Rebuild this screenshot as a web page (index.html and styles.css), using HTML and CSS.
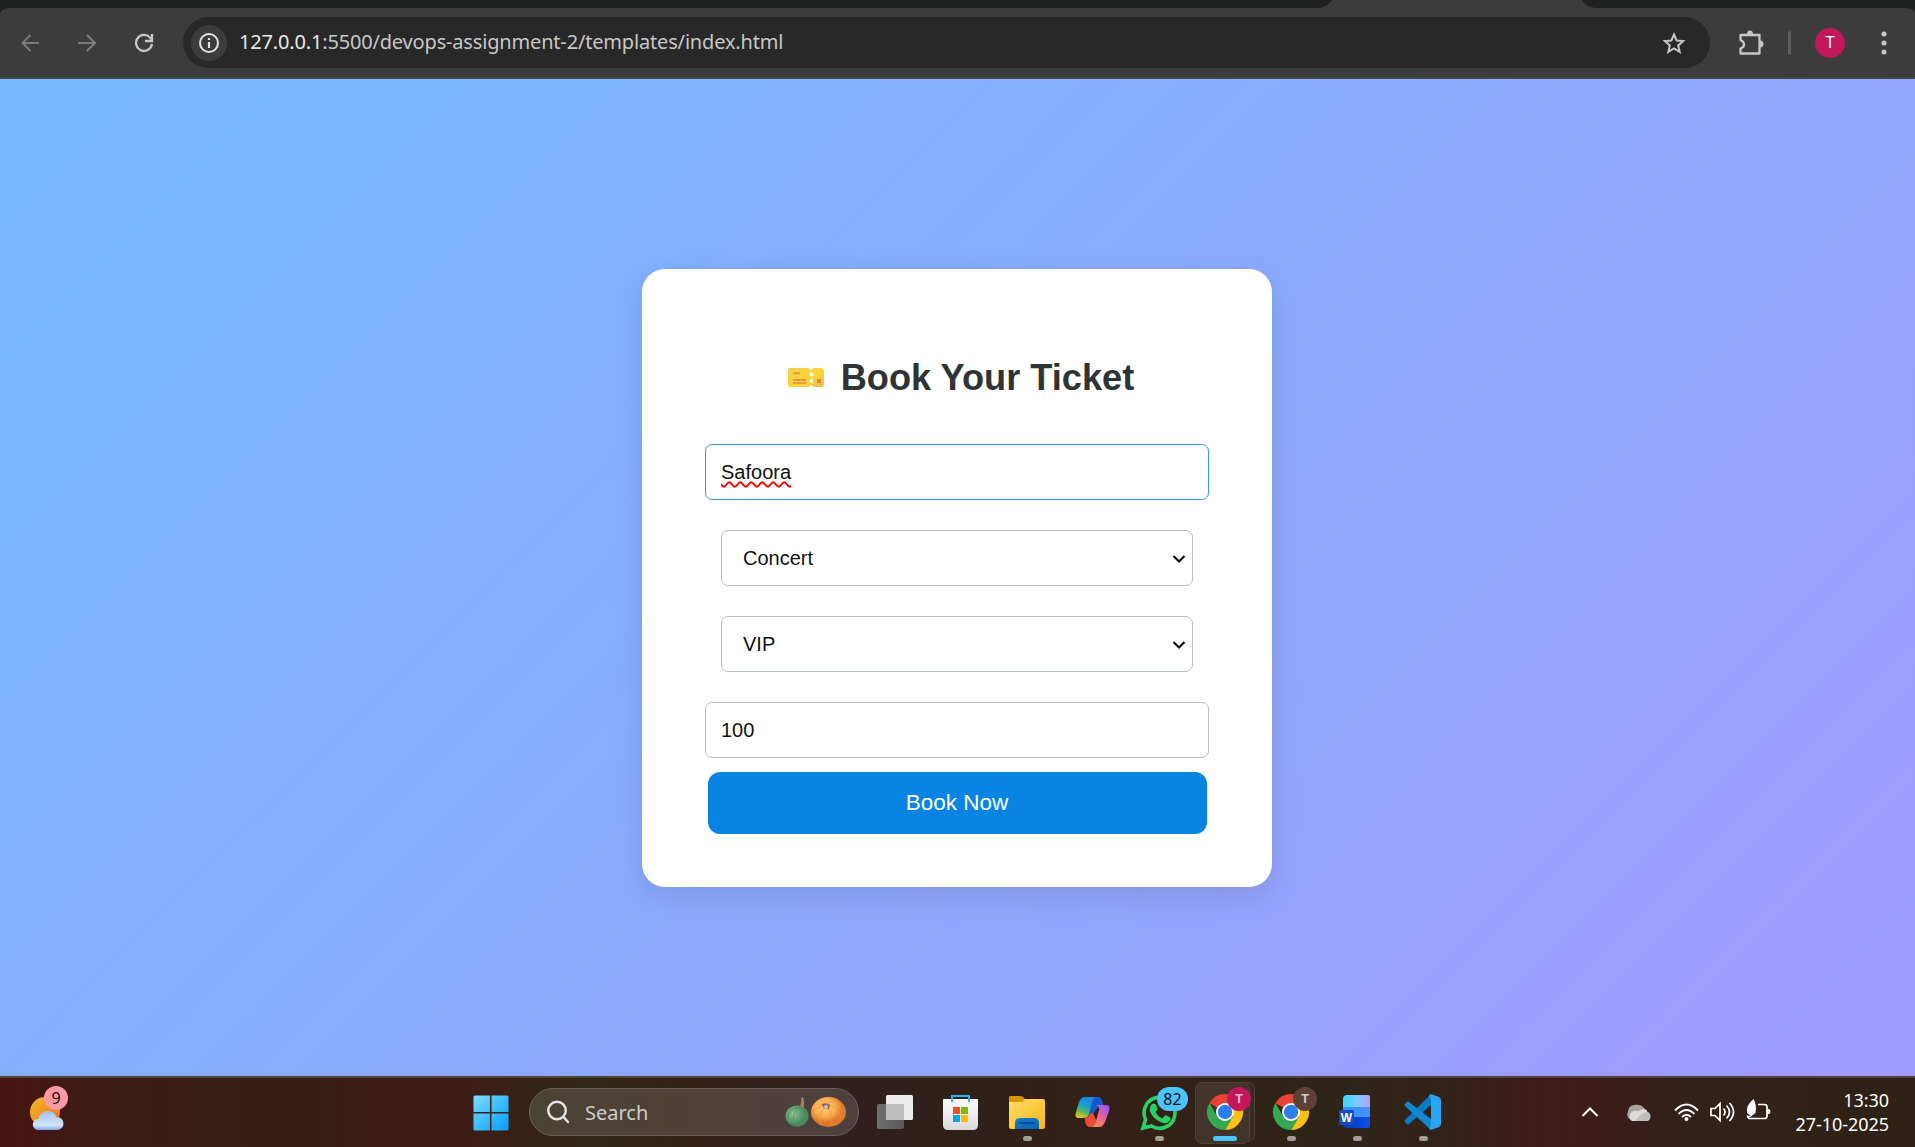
FILE: index.html
```html
<!DOCTYPE html>
<html lang="en">
<head>
<meta charset="utf-8">
<title>Book Your Ticket</title>
<link rel="stylesheet" href="styles.css">
</head>
<body>
<div class="screen">
  <header class="browser">
    <div class="tabstrip">
      <svg width="1915" height="17" viewBox="0 0 1915 17"><path fill="#1f2120" d="M0 0H1332Q1327 8 1317 8H10Q0 8 0 16ZM1582 0H1915V13Q1913 8 1905 8H1597Q1587 8 1582 0Z"/></svg>
    </div>
    <nav class="toolbar">
      <svg class="nav-icon" width="22" height="22" viewBox="0 0 22 22" fill="none" stroke="#7b7b7b" stroke-width="2"><path d="M19 11H2.500M10.500 3L2.500 11l8 8"/></svg>
      <svg class="nav-icon" width="22" height="22" viewBox="0 0 22 22" fill="none" stroke="#7b7b7b" stroke-width="2"><path d="M1 11h17M10 3l8 8-8 8"/></svg>
      <svg class="nav-icon" width="22" height="22" viewBox="0 0 22 22" fill="none" stroke="#c7c7c7" stroke-width="2.300"><path d="M18 12A8 8 0 1 1 16 5.500L18 8M18 2v7h-7"/></svg>
      <div class="omnibox">
        <span class="site-info"><svg width="22" height="22" viewBox="0 0 22 22"><circle cx="11" cy="11" r="9" fill="none" stroke="#e3e3e3" stroke-width="2"/><path d="M11 10v6M11 6v2" stroke="#e3e3e3" stroke-width="2.200"/></svg></span>
        <span class="url"><b>127.0.0.1</b>:5500/devops-assignment-2/templates/index.html</span>
        <svg class="star" width="26" height="26" viewBox="0 0 26 26" fill="none" stroke="#c7c7c7" stroke-width="2"><path d="M13 4.500l2.600 6 6.500.6-4.900 4.300 1.500 6.500-5.700-3.500-5.700 3.500 1.500-6.500L3.900 11.100l6.500-.6z"/></svg>
      </div>
      <svg class="puzzle" width="28" height="28" viewBox="0 0 28 28"><path fill="none" stroke="#c7c7c7" stroke-width="2.300" stroke-linejoin="round" d="M3.500 6H22.500V24.500H3.500V19.500Q7 18.500 7 15.500T3.500 11Z"/><path fill="#c7c7c7" d="M10 5a3 3.500 0 0 1 6 0ZM23 11.500a3.500 3.500 0 0 1 0 7Z"/></svg>
      <span class="divider"></span>
      <span class="avatar">T</span>
      <svg class="menu" width="6" height="24" viewBox="0 0 6 24" fill="#c7c7c7"><circle cx="3" cy="3" r="2.500"/><circle cx="3" cy="12" r="2.500"/><circle cx="3" cy="21" r="2.500"/></svg>
    </nav>
  </header>

  <main class="page">
    <form class="card">
      <h2 class="title">
        <svg width="38" height="22" viewBox="0 0 38 22"><defs><linearGradient id="tk" x1="0" y1="0" x2="1" y2="1"><stop offset="0" stop-color="#f4cf4c"/><stop offset=".6" stop-color="#fbd634"/><stop offset="1" stop-color="#edb84f"/></linearGradient></defs><path fill="url(#tk)" d="M3 1H21Q22 1 22.500 2Q24 4 25.500 2Q26 1 27 1H34Q37 1 37 4V17Q37 20 34 20H27Q26 20 25.500 19Q24 17 22.500 19Q22 20 21 20H3Q1 20 1 18V3Q1 1 3 1Z"/><circle cx="24.500" cy="7.500" r="2" fill="#fff"/><circle cx="24.500" cy="14" r="2" fill="#fff"/><path stroke="#e89a43" stroke-width="2" d="M6 6.300h7M6 13h13M6 16h13"/><path fill="#d68738" d="M30 12h4v4h-4z"/></svg>
        <span>Book Your Ticket</span>
      </h2>
      <div class="field focused"><span class="misspelled">Safoora</span></div>
      <div class="field select"><span>Concert</span><svg width="14" height="10" viewBox="0 0 14 10"><path d="M1.500 2L7 7.500 12.500 2" fill="none" stroke="#111" stroke-width="2.200"/></svg></div>
      <div class="field select"><span>VIP</span><svg width="14" height="10" viewBox="0 0 14 10"><path d="M1.500 2L7 7.500 12.500 2" fill="none" stroke="#111" stroke-width="2.200"/></svg></div>
      <div class="field amount">100</div>
      <button class="book" type="button">Book Now</button>
    </form>
  </main>

  <footer class="taskbar">
    <div class="weather">
      <svg width="34" height="34" viewBox="0 0 34 34"><defs><linearGradient id="sun" x1="0" y1="0" x2="1" y2="1"><stop offset="0" stop-color="#f0bd30"/><stop offset="1" stop-color="#f26a0c"/></linearGradient><linearGradient id="cl" x1="0" y1="0" x2="0" y2="1"><stop offset="0" stop-color="#9dc1f4"/><stop offset=".75" stop-color="#d5e4f8"/><stop offset="1" stop-color="#76a8f2"/></linearGradient></defs><circle cx="15" cy="15" r="15" fill="url(#sun)"/><path fill="url(#cl)" d="M8 33a5.500 5.500 0 0 1 .5-11Q11 14 18 14q6 0 8.500 6a6.500 6.500 0 0 1 1 13Z"/></svg>
      <span class="badge badge-weather">9</span>
    </div>
    <svg class="start" width="36" height="36" viewBox="0 0 36 36"><defs><linearGradient id="win" gradientUnits="userSpaceOnUse" x1="0" y1="0" x2="36" y2="36"><stop offset="0" stop-color="#83ddff"/><stop offset=".5" stop-color="#3dbcfb"/><stop offset="1" stop-color="#079bff"/></linearGradient></defs><path fill="url(#win)" d="M2 .5H17V17H.5V2Q.5.500 2 .5ZM18.500.5H34Q35.500.500 35.500 2V17h-17ZM.5 18.500H17v17H2q-1.500 0-1.500-1.500ZM18.500 18.500h17V34q0 1.500-1.500 1.500H18.500Z"/></svg>
    <div class="search">
      <svg width="24" height="24" viewBox="0 0 24 24" fill="none" stroke="#e6e6e6" stroke-width="2.400" stroke-linecap="round"><circle cx="11" cy="10.500" r="8.800"/><path d="M17.500 17L22 22"/></svg>
      <span class="search-text">Search</span>
      <svg class="pumpkins" width="62" height="32" viewBox="0 0 62 32"><defs><radialGradient id="pg" cx=".35" cy=".4"><stop offset="0" stop-color="#8fc394"/><stop offset="1" stop-color="#4a8a5d"/></radialGradient><radialGradient id="po" cx=".4" cy=".35"><stop offset="0" stop-color="#ffd080"/><stop offset=".6" stop-color="#fbac4e"/><stop offset="1" stop-color="#dd7a2c"/></radialGradient></defs><path fill="#a48168" d="M14 12q3-5 2-10l2-1q2 5 1 11z"/><ellipse cx="12" cy="20" rx="11.500" ry="10.500" fill="url(#pg)"/><path fill="none" stroke="#4b8c5f" stroke-width=".7" d="M14 11q-8 7-5 18M14 11q4 8 1 18M14 11q-12 2-11 13M15 11q7 4 6 14"/><ellipse cx="43.500" cy="16" rx="17.500" ry="15" fill="url(#po)"/><path fill="none" stroke="#ea9440" stroke-width=".7" d="M41 10q-9 8-5 18M41 10q7 8 5 20M41 10q-13 0-14 11M42 9q13 2 14 14M42 8q4-4 10-3"/><path fill="#8d6450" d="M36 8q6-2 9 1l-1 4h-5q0-3-3-5z"/><circle cx="41" cy="11" r="2" fill="#d5c4b5"/></svg>
    </div>
    <div class="apps">
      <div class="app"><svg width="66" height="70" viewBox="0 0 66 70"><defs><linearGradient id="tv"><stop offset="0" stop-color="#707070"/><stop offset="1" stop-color="#585858"/></linearGradient></defs><rect x="15" y="27" width="27" height="25" rx="2" fill="url(#tv)"/><rect x="24" y="18" width="27" height="25" rx="1.500" fill="#ececec"/><path fill="#bdbdbd" d="M24 27h18v16H24z"/></svg></div>
      <div class="app"><svg width="66" height="70" viewBox="0 0 66 70"><defs><linearGradient id="bag" x1="0" y1="0" x2="0" y2="1"><stop offset="0" stop-color="#fff"/><stop offset="1" stop-color="#d9d9d9"/></linearGradient></defs><path fill="url(#bag)" d="M15 22h35v26q0 5-5 5H20q-5 0-5-5z"/><path fill="none" stroke="#2ab1ee" stroke-width="2" d="M24 25v-6h17v6"/><path fill="#f25022" d="M25 30h7v7h-7z"/><path fill="#7fba00" d="M33 30h7v7h-7z"/><path fill="#00a4ef" d="M25 38h7v7h-7z"/><path fill="#ffb900" d="M33 38h7v7h-7z"/></svg></div>
      <div class="app running"><svg width="66" height="70" viewBox="0 0 66 70"><defs><linearGradient id="fo" x1="0" y1="0" x2="1" y2="1"><stop offset="0" stop-color="#ffdc6c"/><stop offset="1" stop-color="#fcb815"/></linearGradient><linearGradient id="fb" x1="0" y1="0" x2="1" y2="1"><stop offset="0" stop-color="#0d80cf"/><stop offset="1" stop-color="#0862b1"/></linearGradient></defs><path fill="#dd9607" d="M15 20q0-1 2-1h9q2 0 4 2l3 3-4 4H15z"/><path fill="url(#fo)" d="M15 25h13l3-3h18q2 0 2 2v26q0 2-2 2H17q-2 0-2-2z"/><path fill="url(#fb)" d="M21 52v-6q0-5 5-5h14q5 0 5 5v6z"/><path stroke="#053f7d" stroke-width="1.500" d="M25 46h15"/></svg></div>
      <div class="app"><svg width="66" height="70" viewBox="-1 0 66 70"><defs><linearGradient id="c1" x1=".5" y1="0" x2=".2" y2="1"><stop offset="0" stop-color="#1687e8"/><stop offset=".4" stop-color="#19a3c7"/><stop offset=".7" stop-color="#65b657"/><stop offset="1" stop-color="#ecc51b"/></linearGradient><linearGradient id="c2" x1=".8" y1="0" x2=".2" y2="1"><stop offset="0" stop-color="#9956f3"/><stop offset=".5" stop-color="#ec5f9d"/><stop offset="1" stop-color="#fc934b"/></linearGradient></defs><path fill="#1559cb" d="M24 20H37q3 0 4 3l2 7q-6-1-8 3L29 42z"/><path fill="url(#c1)" d="M24 20h11q-3 1-4 5l-3 12q-1 4-5 4h-5q-5 0-3-6l3-10q2-5 6-5z"/><path fill="#e94c37" d="M24 41q3 0 5-4l3-1 6 14h-9q-4 0-5-6z"/><path fill="url(#c2)" d="M35 28h10q5 0 3 6l-4 11q-2 5-6 5h-8q4 0 5-6l3-11q1-4-3-5z"/></svg></div>
      <div class="app running"><svg width="66" height="70" viewBox="0 0 66 70"><path fill="none" stroke="#25d366" stroke-width="3.600" d="M17 51l2.600-8.500A15.500 15.500 0 1 1 25.500 49Z"/><path fill="#25d366" d="M25 28q3-3 5 0l1.500 4q0 1-2 3 2.500 5 7 6.500l2-2.500q1-1 2-.5l3.500 2q1.500 1 0 3-3 3.500-7 2.500Q27 42.500 24 34.500 23 31 25 28z"/></svg><span class="badge badge-count">82</span></div>
      <div class="app running active"><span class="stack"></span><svg width="66" height="70" viewBox="0 0 66 70"><g transform="translate(33 35)"><path fill="#ea4335" d="M0 0L-15.600-9A18 18 0 0 1 15.600-9Z"/><path fill="#fbc116" d="M0 0L0-9H15.600A18 18 0 0 1 0 18L7.800 4.500Z"/><path fill="#34a853" d="M0 18A18 18 0 0 1-15.600-9L-7.800 4.500 0 9 7.800 4.500Z"/><circle r="9" fill="#fff"/><circle r="7.200" fill="#2b7de9"/></g></svg><span class="badge badge-user pink">T</span></div>
      <div class="app running"><svg width="66" height="70" viewBox="0 0 66 70"><g transform="translate(33 35)"><path fill="#ea4335" d="M0 0L-15.600-9A18 18 0 0 1 15.600-9Z"/><path fill="#fbc116" d="M0 0L0-9H15.600A18 18 0 0 1 0 18L7.800 4.500Z"/><path fill="#34a853" d="M0 18A18 18 0 0 1-15.600-9L-7.800 4.500 0 9 7.800 4.500Z"/><circle r="9" fill="#fff"/><circle r="7.200" fill="#2b7de9"/></g></svg><span class="badge badge-user brown">T</span></div>
      <div class="app running"><svg width="66" height="70" viewBox="0 0 66 70"><defs><linearGradient id="w1"><stop offset="0" stop-color="#36d6fd"/><stop offset=".5" stop-color="#74cdfd"/><stop offset="1" stop-color="#bb9dfa"/></linearGradient><linearGradient id="w2"><stop offset="0" stop-color="#2499f8"/><stop offset="1" stop-color="#4f8dfb"/></linearGradient><linearGradient id="w3"><stop offset="0" stop-color="#033cad"/><stop offset="1" stop-color="#0c4ff0"/></linearGradient></defs><path fill="url(#w1)" d="M23 18h21q2 0 2 2v10H19v-8q0-4 4-4z"/><path fill="url(#w2)" d="M19 30h27v10H19z"/><path fill="url(#w3)" d="M19 40h27v9q0 2-2 2H23q-4 0-4-4z"/><rect x="15" y="33" width="15" height="15" rx="2" fill="#1649c3"/><text x="22.500" y="45" text-anchor="middle" class="word-letter">W</text></svg></div>
      <div class="app running"><svg width="66" height="70" viewBox="0 0 66 70"><path fill="#0b7bc6" d="M41 17v11L19 47q-1 1-2 0l-2-2q-1-1 0-2z"/><path fill="#1089d5" d="M41 53V42L19 25q-1-1-2 0l-2 2q-1 1 0 2z"/><path fill="#27a5f2" d="M41 17l8 3q2 1 2 3v24q0 2-2 3l-8 3q-1 0-2-2l2-3V22l-2-3q1-2 2-2z"/></svg></div>
    </div>
    <div class="tray">
      <svg width="18" height="12" viewBox="0 0 18 12" fill="none" stroke="#fff" stroke-width="2"><path d="M1.500 10L9 2.500l7.500 7.500"/></svg>
      <svg class="onedrive" width="25" height="17" viewBox="0 0 25 17"><path fill="#a8a2a0" d="M5 15.500A5 5 0 0 1 2 8Q2 2 8 1q4-1 8 1l3 3-10 11z"/><path fill="#ddd9d8" d="M6 17a5 5 0 0 1-2-7Q7 6 12 7l5-2q4 0 4.500 3a4.700 4.700 0 0 1-1 9z"/><path fill="#c3bebd" d="M9 17q5-8 12-9a4.700 4.700 0 0 1-.5 9z"/></svg>
      <svg class="wifi" width="25" height="19" viewBox="0 0 25 19" fill="none" stroke="#fff" stroke-width="1.900"><path d="M1 7.500q11.500-12 23 0M4.500 11q8-8 16 0M8 14q4.500-4.500 9 0"/><circle cx="12.500" cy="16" r="2" fill="#fff" stroke="none"/></svg>
      <svg class="sound" width="25" height="22" viewBox="0 0 25 22" fill="none" stroke="#fff" stroke-width="1.700"><path d="M1 7.500h4l5-5v17l-5-5H1zM13.500 7.500q3 3.500 0 7M16.500 4.500q6 6.500 0 13M19.500 2q8 9 0 18"/></svg>
      <svg class="battery" width="25" height="22" viewBox="0 0 25 22"><path fill="none" stroke="#fff" stroke-width="1.700" d="M12 5.500h6.500q2.500 0 2.500 2.500v9q0 2.500-2.500 2.500H4q-2 0-2.500-3"/><path fill="#fff" d="M21 10h1.500q2 0 2 2.500t-2 2.500H21zM7.500 0Q0 6 1 14q4 4 8.500 0Q11 6 7.500 0z"/><path fill="none" stroke="#fff" stroke-width="1.500" d="M2 18q4-1 6-5"/></svg>
      <div class="clock"><span>13:30</span><span>27-10-2025</span></div>
    </div>
  </footer>
</div>
</body>
</html>
```

FILE: styles.css
```css
* { box-sizing: border-box; }
body { margin: 0; }
svg { display: block; flex: none; }

.screen {
  display: flex;
  flex-direction: column;
  width: 1915px;
  height: 1147px;
  overflow: hidden;
  font-family: "Noto Sans", "Open Sans", sans-serif;
}

/* Browser chrome */
.browser { height: 79px; background: #3c3c3c; border-bottom: 2px solid #464746; }
.tabstrip { height: 17px; }
.toolbar { display: flex; align-items: center; height: 51px; padding-left: 20px; }
.nav-icon { margin-right: 35px; }
.omnibox {
  display: flex;
  align-items: center;
  width: 1527px;
  height: 51px;
  margin-left: -8px;
  padding: 0 23px 0 8px;
  border-radius: 26px;
  background: #282828;
}
.site-info {
  display: grid;
  place-items: center;
  width: 36px;
  height: 36px;
  margin-right: 12px;
  border-radius: 50%;
  background: #3c3c3c;
}
.url { margin-top: -2px; font-size: 20px; line-height: 30px; letter-spacing: -.17px; color: #c7c7c7; white-space: nowrap; }
.url b { font-weight: 400; color: #e8e8e8; }
.star { margin-left: auto; }
.puzzle { margin-left: 27px; }
.divider { width: 3px; height: 24px; margin-left: 23px; border-radius: 2px; background: #5d5e5d; }
.avatar {
  width: 30px;
  height: 30px;
  margin-left: 24px;
  border-radius: 50%;
  background: #c2185b;
  color: #fff;
  font: 16px/30px Roboto, sans-serif;
  text-align: center;
}
.menu { margin-left: 36px; }

/* Booking page */
.page {
  display: flex;
  justify-content: center;
  align-items: center;
  height: 997px;
  padding: 1px 1px 0 0;
  background: linear-gradient(135deg, #74b9ff, #a29bfe);
  font-family: "Liberation Sans", Arial, sans-serif;
}
.card {
  display: flex;
  flex-direction: column;
  align-items: center;
  width: 630px;
  height: 618px;
  padding-top: 84px;
  border-radius: 23px;
  background: #fff;
  box-shadow: 0 10px 31px rgba(0, 0, 0, .1);
}
.title {
  display: flex;
  align-items: center;
  gap: 16px;
  height: 49px;
  margin: 0 0 42px;
  padding: 1px 0 0 7px;
  color: #2d3436;
  font-size: 36.2px;
  line-height: 48px;
  white-space: nowrap;
}
.field {
  display: flex;
  align-items: center;
  width: 504px;
  height: 56px;
  margin-bottom: 30px;
  padding: 1px 15px 0;
  border: 1px solid #b2bec3;
  border-radius: 7px;
  color: #111;
  font-size: 20px;
}
.focused { border-color: #3d9de8; }
.misspelled {
  text-decoration: underline wavy #f00 1.5px;
  text-decoration-skip-ink: none;
  text-underline-offset: 2px;
}
.select { justify-content: space-between; width: 472px; padding: 1px 6px 0 21px; }
.amount { margin-bottom: 14px; padding-top: 0; }
.book {
  width: 499px;
  height: 62px;
  border: 0;
  border-radius: 12px;
  background: #0984e3;
  color: #fff;
  font: 22.5px "Liberation Sans", Arial, sans-serif;
}

/* Taskbar */
.taskbar {
  display: flex;
  height: 71px;
  border-top: 2px solid #50423b;
  background: linear-gradient(90deg, #481513 0, #3a1d14 120px, #361e14 300px, #401b15 440px, #2f2817 590px, #352016 700px, #2f201f 850px, #2f201a 960px, #352016 1130px, #2d2518 1330px, #33221a 1450px, #411b17 1550px, #33211a 1680px, #2e2115 1915px);
}
.weather { position: relative; width: 36px; margin: 19px 407px 0 30px; }
.start { margin: 17px 20px 0 0; }
.search {
  display: flex;
  align-items: center;
  width: 330px;
  height: 48px;
  margin: 10px 3px 0 0;
  padding: 0 11px 0 16px;
  border: 1px solid #6c605a;
  border-radius: 24px;
  background: linear-gradient(90deg, #4a4434, #4f4039 50%, #4c4040);
}
.search-text { margin-left: 15px; color: #d0cecc; font-size: 20px; }
.pumpkins { margin-left: auto; }
.apps { display: flex; }
.app { position: relative; width: 66px; height: 70px; margin-top: -1px; }
.app svg { position: relative; }
.running::after {
  content: "";
  position: absolute;
  left: 29px;
  top: 59px;
  width: 9px;
  height: 5px;
  border-radius: 3px;
  background: #a39c97;
}
.active::before, .stack {
  content: "";
  position: absolute;
  left: 3px;
  top: 5px;
  width: 53px;
  height: 60px;
  border: 1px solid #4c4138;
  border-radius: 7px;
  background: #42342a;
}
.stack { left: 8px; background: #382b21; width: 55px; }
.active::before { z-index: 1; }
.active svg { z-index: 2; }
.active::after { left: 21px; width: 24px; background: #4cc2ff; z-index: 2; }
.badge { position: absolute; z-index: 3; height: 24px; border-radius: 12px; color: #111; font-size: 16px; line-height: 24px; text-align: center; }
.badge-weather { left: 14px; top: -11px; width: 24px; background: #ff99a4; }
.badge-count { left: 31px; top: 10px; width: 31px; background: #4cc2ff; }
.badge-user { left: 35px; top: 10px; width: 24px; font: bold 13px/24px Roboto, sans-serif; }
.pink { background: #c2185b; color: #f2b8cf; }
.brown { background: #5d4037; color: #d5cac6; }
.word-letter { fill: #fff; font: bold 12px "Liberation Sans", sans-serif; }
.tray { display: flex; align-items: center; height: 68px; margin-left: 125px; }
.onedrive { margin-left: 27px; }
.wifi { margin-left: 23px; }
.sound { margin-left: 11px; }
.battery { margin-left: 11px; margin-top: -4px; }
.clock {
  display: flex;
  flex-direction: column;
  align-items: flex-end;
  width: 118px;
  color: #fff;
  font-size: 18px;
  line-height: 24px;
  letter-spacing: -.05px;
  white-space: nowrap;
}
```
